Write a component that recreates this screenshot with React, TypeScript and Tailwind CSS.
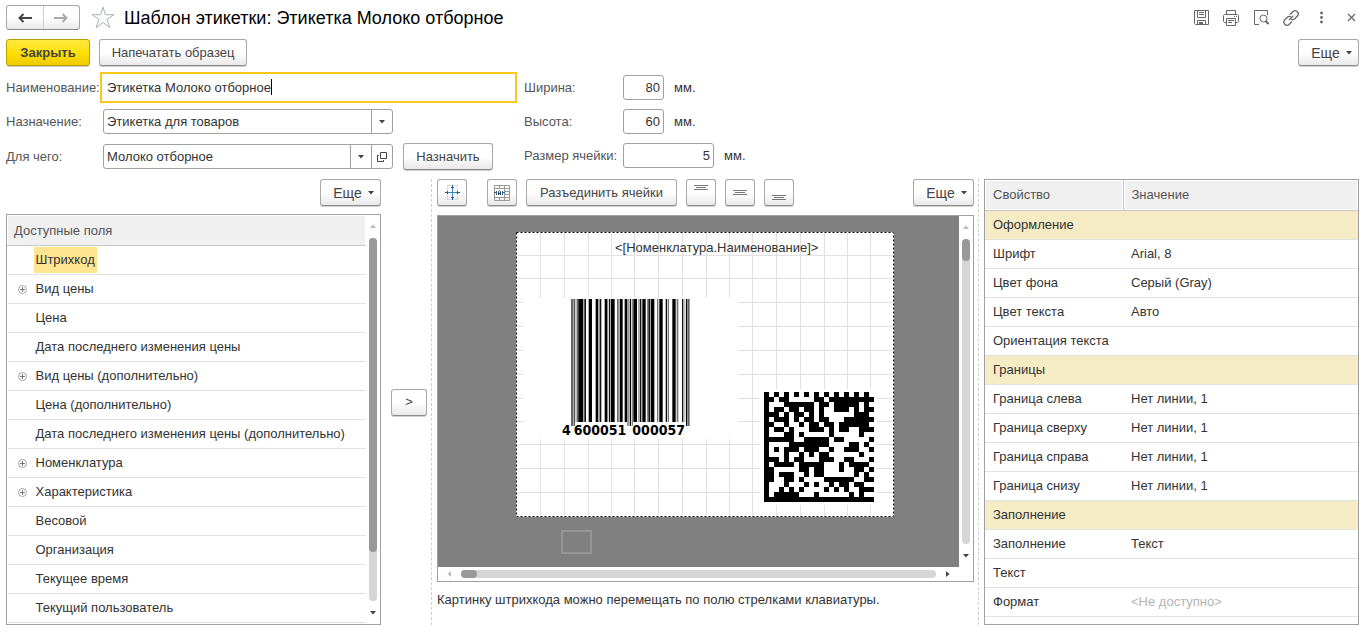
import React from "react";

const BUTTON =
  "flex h-[27px] shrink-0 items-center justify-center rounded-[3px] border border-[#a8a8a8] border-b-[#8c8c8c] bg-linear-to-b from-white from-50% to-[#e9e9e9] text-[#444] shadow-[0_1px_0_#d0d0d0]";
const FIELD = "flex h-[25px] rounded-[3px] border border-[#a0a0a0] bg-white";
const TEXT_INPUT = "min-w-0 flex-1 bg-transparent px-[3px] text-[#333] outline-none";
const LABEL = "shrink-0 whitespace-nowrap text-[#555]";

const FIELDS = [
  { name: "Штрихкод", selected: true },
  { name: "Вид цены", group: true },
  { name: "Цена" },
  { name: "Дата последнего изменения цены" },
  { name: "Вид цены (дополнительно)", group: true },
  { name: "Цена (дополнительно)" },
  { name: "Дата последнего изменения цены (дополнительно)" },
  { name: "Номенклатура", group: true },
  { name: "Характеристика", group: true },
  { name: "Весовой" },
  { name: "Организация" },
  { name: "Текущее время" },
  { name: "Текущий пользователь" },
];

const PROPERTIES: { name: string; value?: string; section?: boolean; disabled?: boolean }[] = [
  { name: "Оформление", section: true },
  { name: "Шрифт", value: "Arial, 8" },
  { name: "Цвет фона", value: "Серый (Gray)" },
  { name: "Цвет текста", value: "Авто" },
  { name: "Ориентация текста" },
  { name: "Границы", section: true },
  { name: "Граница слева", value: "Нет линии, 1" },
  { name: "Граница сверху", value: "Нет линии, 1" },
  { name: "Граница справа", value: "Нет линии, 1" },
  { name: "Граница снизу", value: "Нет линии, 1" },
  { name: "Заполнение", section: true },
  { name: "Заполнение", value: "Текст" },
  { name: "Текст" },
  { name: "Формат", value: "<Не доступно>", disabled: true },
];

const MATRIX = [
  "1010101010101010101010",
  "1101100000110111111111",
  "1000111111011011111010",
  "1011011011010011101011",
  "1110101101010000001110",
  "1011101011011000111111",
  "1100100101101101111110",
  "1011010001110101100111",
  "1000110100000100000100",
  "1111110011111011000001",
  "1000011111111000011010",
  "1010111011100100111001",
  "1000100101011000000100",
  "1110101100011100110001",
  "1011110111110001011110",
  "1100000110110001001101",
  "1101110010110000001010",
  "1100110100001111110011",
  "1000100010100101101100",
  "1001010100001010100111",
  "1011111000100000010100",
  "1111111111111111111111",
];

/* Each bar: start, end, colour; three units to a pixel. */
const BARS: [number, number, string][] = [
  [0, 6, "#666"], [8, 11, "#000"], [13, 18, "#bbb"], [18, 22, "#666"], [22, 37, "#000"],
  [40, 45, "#111"], [53, 63, "#000"], [74, 81, "#000"], [82, 85, "#888"], [86, 91, "#111"],
  [101, 108, "#000"], [108, 112, "#888"], [114, 118, "#111"], [120, 131, "#000"],
  [138, 143, "#666"], [146, 155, "#000"], [161, 168, "#000"], [168, 176, "#999"],
  [177, 180, "#000"], [182, 186, "#888"], [187, 198, "#000"], [201, 204, "#aaa"],
  [206, 211, "#111"], [214, 224, "#000"], [228, 231, "#888"], [232, 237, "#111"],
  [239, 250, "#000"], [258, 262, "#777"], [265, 275, "#000"], [284, 288, "#111"],
  [290, 294, "#777"], [304, 314, "#000"], [317, 322, "#777"], [333, 337, "#111"],
  [340, 343, "#aaa"], [345, 349, "#000"], [350, 356, "#666"],
];

const COLUMN_LINES = [24, 48, 72, 95, 118, 142, 166, 190, 213, 236, 260, 284, 308, 331, 354];
const ROW_LINES = [23, 46, 70, 94, 118, 142, 166, 189, 212, 236, 260];

function Caret({ className = "" }: { className?: string }) {
  return (
    <svg className={`shrink-0 ${className}`} width="6" height="4" viewBox="0 0 6 4" aria-hidden="true">
      <path d="M0 0H6L3 3.5Z" fill="currentColor" />
    </svg>
  );
}

function MoreButton() {
  return (
    <button type="button" className={`${BUTTON} w-[61px] gap-[6px] pl-[6px]`}>
      <span className="text-sm">Еще</span>
      <Caret />
    </button>
  );
}

function ExpandIcon() {
  return (
    <svg width="9" height="9" viewBox="0 0 9 9" fill="none" aria-hidden="true">
      <circle cx="4.5" cy="4.5" r="4" stroke="#a5a5a5" />
      <path d="M2 4.5H7M4.5 2V7" stroke="#777" />
    </svg>
  );
}

function VerticalScroll({ thumb, rest }: { thumb: string; rest: string }) {
  return (
    <div className="flex w-[14px] shrink-0 flex-col items-center bg-white py-[9px]" aria-hidden="true">
      <Caret className="rotate-180 text-[#bbb]" />
      <div className="mt-[10px] mb-[10px] flex w-2 flex-1 flex-col rounded-full bg-[#d6d6d6]">
        <div className={`rounded-full bg-[#999] ${thumb}`} />
        <div className={rest} />
      </div>
      <Caret className="text-[#444]" />
    </div>
  );
}

function TopBar() {
  return (
    <header className="flex h-[25px] items-center">
      <div className="flex h-[25px] w-[74px] shrink-0 rounded-[3px] border border-[#a8a8a8] border-b-[#8c8c8c] bg-linear-to-b from-white from-50% to-[#e9e9e9]">
        <button type="button" aria-label="Назад" className="flex flex-1 items-center justify-center border-r border-[#d0d0d0]">
          <svg width="14" height="10" viewBox="0 0 14 10" fill="none" stroke="#444" strokeWidth="2" aria-hidden="true">
            <path d="M14 5H2M5.5 1L1.5 5L5.5 9" />
          </svg>
        </button>
        <button type="button" aria-label="Вперед" className="flex flex-1 items-center justify-center">
          <svg width="14" height="10" viewBox="0 0 14 10" fill="none" stroke="#aaa" strokeWidth="2" aria-hidden="true">
            <path d="M0 5H12M8.500 1L12.500 5L8.500 9" />
          </svg>
        </button>
      </div>
      <button type="button" aria-label="В избранное" className="ml-[11px]">
        <svg width="24" height="23" viewBox="0 0 24 23" fill="none" stroke="#aab0b6" aria-hidden="true">
          <path d="M12 1L14.4 8.7H22.8L16 13.4L18.8 21.5L12 16.5L5.200 21.5L8 13.4L1.200 8.7H9.600Z" />
        </svg>
      </button>
      <h1 className="ml-[9px] min-w-0 flex-1 truncate text-lg text-black">Шаблон этикетки: Этикетка Молоко отборное</h1>
      <div className="flex items-center gap-[14px] text-[#666]">
        <button type="button" aria-label="Сохранить">
          <svg width="16" height="16" viewBox="0 0 16 16" fill="none" stroke="currentColor" aria-hidden="true">
            <path d="M1.5 .5H15.5V14.5H2.5L1.5 13.5ZM4.5 .5V7.5H12.5V.5M6 2.5H11M6 4.500H11M4.5 14.5V10.5H12.5V14.5" />
            <path d="M6 12H10V15H6Z" fill="currentColor" stroke="none" />
          </svg>
        </button>
        <button type="button" aria-label="Печать">
          <svg width="16" height="16" viewBox="0 0 16 16" fill="none" stroke="currentColor" aria-hidden="true">
            <path d="M3.5 4.5V.5H12.5V4.5M3.5 12.5H1.5L.5 11.5V5.5L1.5 4.5H14.5L15.5 5.5V11.5L14.5 12.5H12.5M3.5 8.5H12.5V15.5H3.5ZM5 10.5H11M5 12.5H9M11 6.5H12M13 6.5H14" />
          </svg>
        </button>
        <button type="button" aria-label="Предварительный просмотр">
          <svg width="16" height="16" viewBox="0 0 16 16" fill="none" stroke="currentColor" aria-hidden="true">
            <path d="M6 14.5H1.5V.5H14.5V5" />
            <circle cx="10.5" cy="8.5" r="3.5" />
            <path d="M12.500 11L15.500 14" strokeWidth="2" />
          </svg>
        </button>
        <button type="button" aria-label="Получить ссылку">
          <svg width="16" height="16" viewBox="0 0 16 16" fill="none" stroke="currentColor" strokeWidth="1.3" aria-hidden="true">
            <path d="M7 4.5L9.7 1.8A3 3 0 0 1 14.2 6.3L11.5 9Q9.8 10.2 8.2 9.2M9 11.5L6.3 14.2A3 3 0 0 1 1.8 9.7L4.5 7Q6.2 5.8 7.8 6.8M6 10L10 6" />
          </svg>
        </button>
        <button type="button" aria-label="Дополнительно">
          <svg width="16" height="16" viewBox="0 0 16 16" fill="currentColor" aria-hidden="true">
            <circle cx="8.5" cy="3" r="1.4" />
            <circle cx="8.5" cy="7.500" r="1.4" />
            <circle cx="8.5" cy="12" r="1.4" />
          </svg>
        </button>
        <button type="button" aria-label="Закрыть окно">
          <svg width="16" height="16" viewBox="0 0 16 16" fill="none" stroke="currentColor" strokeWidth="1.2" aria-hidden="true">
            <path d="M5 4L12 11M12 4L5 11" />
          </svg>
        </button>
      </div>
    </header>
  );
}

function LabelForm() {
  return (
    <form className="mt-[9px] flex" onSubmit={(e) => e.preventDefault()}>
      <div className="flex w-[508px] shrink-0 flex-col gap-[9px]">
        <div className="flex items-center">
          <label htmlFor="name" className={`${LABEL} w-[97px]`}>Наименование:</label>
          <div className="relative flex h-[25px] flex-1 bg-white outline-2 outline-offset-[1px] outline-[#fac81e]">
            <input id="name" className="min-w-0 flex-1 bg-transparent px-1 text-[#333] outline-none" defaultValue="Этикетка Молоко отборное" />
            <span className="absolute top-1 left-[168px] h-4 w-px bg-black" aria-hidden="true" />
          </div>
        </div>
        <div className="flex items-center">
          <label htmlFor="purpose" className={`${LABEL} w-[97px]`}>Назначение:</label>
          <div className={`${FIELD} w-[290px]`}>
            <select id="purpose" className={`${TEXT_INPUT} appearance-none`}>
              <option>Этикетка для товаров</option>
            </select>
            <span className="flex w-[21px] items-center justify-center border-l border-[#a0a0a0] text-[#444]">
              <Caret />
            </span>
          </div>
        </div>
        <div className="flex items-center">
          <label htmlFor="target" className={`${LABEL} w-[97px]`}>Для чего:</label>
          <div className={`${FIELD} w-[290px]`}>
            <input id="target" className={TEXT_INPUT} defaultValue="Молоко отборное" />
            <button type="button" aria-label="Выбрать" className="flex w-[21px] items-center justify-center border-l border-[#a0a0a0] text-[#444]">
              <Caret />
            </button>
            <button type="button" aria-label="Открыть" className="flex w-[21px] items-center justify-center border-l border-[#a0a0a0]">
              <svg width="10" height="10" viewBox="0 0 10 10" fill="none" stroke="#444" aria-hidden="true">
                <path d="M3.5 .5H9.5V6.5H3.5ZM2 3.5H.5V9.5H6.5V8" />
              </svg>
            </button>
          </div>
          <button type="button" className={`${BUTTON} ml-[10px] w-[90px]`}>Назначить</button>
        </div>
      </div>
      <div className="ml-[10px] flex flex-col gap-[9px]">
        <div className="flex items-center">
          <label htmlFor="width" className={`${LABEL} w-[99px]`}>Ширина:</label>
          <div className={`${FIELD} w-[41px]`}>
            <input id="width" className={`${TEXT_INPUT} text-right`} defaultValue="80" />
          </div>
          <span className="ml-[10px] text-[#333]">мм.</span>
        </div>
        <div className="flex items-center">
          <label htmlFor="height" className={`${LABEL} w-[99px]`}>Высота:</label>
          <div className={`${FIELD} w-[41px]`}>
            <input id="height" className={`${TEXT_INPUT} text-right`} defaultValue="60" />
          </div>
          <span className="ml-[10px] text-[#333]">мм.</span>
        </div>
        <div className="flex items-center">
          <label htmlFor="cell" className={`${LABEL} w-[99px]`}>Размер ячейки:</label>
          <div className={`${FIELD} w-[91px]`}>
            <input id="cell" className={`${TEXT_INPUT} text-right`} defaultValue="5" />
          </div>
          <span className="ml-[10px] text-[#333]">мм.</span>
        </div>
      </div>
    </form>
  );
}

function FieldsPanel() {
  return (
    <section className="flex min-w-0 border-r border-dashed border-[#cfcfcf] pr-1">
      <div className="flex min-w-0 flex-1 flex-col">
        <div className="mb-2 flex justify-end">
          <MoreButton />
        </div>
        <div className="flex flex-1 border border-[#a0a0a0]">
          <div className="min-w-0 flex-1">
            <table className="w-full border-collapse text-left">
              <thead>
                <tr className="h-[30px] border-b border-[#c8c8c8]">
                  <th className="border border-white border-b-[#c8c8c8] bg-[#f0f0f0] px-[6px] py-0 font-normal text-[#555]">Доступные поля</th>
                </tr>
              </thead>
              <tbody>
                {FIELDS.map((field) => (
                  <tr key={field.name} className="h-[29px] border-b border-[#e2e2e2]">
                    <td className="p-0">
                      <div className="flex items-center">
                        <span className="flex w-[26px] shrink-0 justify-center pl-1">{field.group && <ExpandIcon />}</span>
                        <span className={`px-[2px] leading-[26px] whitespace-nowrap ${field.selected ? "bg-[#ffe590]" : ""}`}>{field.name}</span>
                      </div>
                    </td>
                  </tr>
                ))}
              </tbody>
            </table>
          </div>
          <VerticalScroll thumb="grow-[314]" rest="grow-[49]" />
        </div>
      </div>
      <button type="button" aria-label="Добавить поле" className={`${BUTTON} ml-[10px] w-[36px] self-center`}>&gt;</button>
    </section>
  );
}

function Barcode() {
  return (
    <div className="absolute top-[66px] left-[8px] h-[141px] w-[214px] bg-white">
      <svg className="absolute top-[1px] left-[47px]" width="119" height="127" viewBox="0 0 357 381" aria-hidden="true">
        {BARS.map(([from, to, fill]) => {
          const guard = to <= 11 || (from >= 168 && to <= 186) || from >= 345;
          return <rect key={from} x={from} y="0" width={to - from} height={guard ? 381 : 369} fill={fill} />;
        })}
      </svg>
      <div className="absolute top-[124px] left-[38px] flex gap-[3px] font-['DejaVu_Sans_Condensed','DejaVu_Sans',sans-serif] text-sm leading-4 font-bold text-black">
        <span>4</span>
        <span className="mr-[3px]">600051</span>
        <span>000057</span>
      </div>
    </div>
  );
}

function DataMatrix() {
  return (
    <div className="absolute top-[157px] left-[245px] bg-white p-[3px]">
      <svg width="110" height="110" viewBox="0 0 22 22" shapeRendering="crispEdges" aria-hidden="true">
        {MATRIX.map((row, y) =>
          Array.from(row).map((cell, x) => (cell === "1" ? <rect key={`${x}-${y}`} x={x} y={y} width="1" height="1" /> : null)),
        )}
      </svg>
    </div>
  );
}

function LabelCanvas() {
  return (
    <div className="relative h-[351px] min-w-0 flex-1 overflow-hidden bg-[#808080]">
      <div className="absolute top-4 left-[78px] h-[285px] w-[378px] bg-white">
        <svg width="378" height="285" viewBox="0 0 378 285" fill="none" aria-hidden="true">
          {COLUMN_LINES.map((x) => (
            <path key={x} d={`M${x + 0.5} 0V285`} stroke="#e2e2e2" />
          ))}
          {ROW_LINES.map((y) => (
            <path key={y} d={`M0 ${y + 0.5}H378`} stroke="#e2e2e2" />
          ))}
          <rect x=".5" y=".5" width="377" height="284" stroke="#fff" />
          <rect x=".5" y=".5" width="377" height="284" stroke="#000" strokeDasharray="2 2" />
        </svg>
        <p className="absolute top-2 left-[99px] whitespace-nowrap">&lt;[Номенклатура.Наименование]&gt;</p>
        <Barcode />
        <DataMatrix />
      </div>
      <div className="absolute top-[314px] left-[123px] h-[24px] w-[31px] border-2 border-[#959595]" />
    </div>
  );
}

function AlignIcon({ shift }: { shift: number }) {
  return (
    <svg width="14" height="17" viewBox="0 0 14 17" fill="none" stroke="#777" aria-hidden="true">
      <path d={`M0 ${shift + 0.5}H14M2 ${shift + 2.5}H12M0 ${shift + 4.5}H14`} />
    </svg>
  );
}

function Toolbar() {
  return (
    <div className="flex">
      <button type="button" aria-label="Размер" className={`${BUTTON} w-[30px]`}>
        <svg width="15" height="15" viewBox="0 0 15 15" fill="none" aria-hidden="true">
          <path d="M2.5 .5H12.5V14.5H2.5Z" stroke="#bbb" strokeDasharray="1 1" />
          <path d="M1 7.5H14M7.5 1V14" stroke="#3d86b8" />
          <path d="M0 7.5H2M13 7.5H15M2.500 6V9M12.500 6V9M7.5 0V2M7.5 13V15M6 2.500H9M6 12.500H9" stroke="#1a5f92" />
        </svg>
      </button>
      <button type="button" aria-label="Объединить ячейки" className={`${BUTTON} ml-5 w-[30px]`}>
        <svg width="16" height="16" viewBox="0 0 16 16" fill="none" aria-hidden="true">
          <path d="M.5 .5H15.5V15.5H.5ZM.5 3.5H15.5M.5 12.5H15.5M10.5 .5V15.5M5.5 .5V3.5M5.5 12.5V15.5M10.5 6.5H15.5M10.5 9.5H15.5" stroke="#999" />
          <path d="M1 4H10V12H1Z" fill="#fff" />
          <path d="M2.5 6V10M8.5 6V10M0 7.5H3M8 7.500H11" stroke="#1a6496" />
          <path d="M4.500 10V6.500L5.5 5.500L6.500 6.500V10M4.500 8.500H6.500" stroke="#333" />
        </svg>
      </button>
      <button type="button" className={`${BUTTON} ml-[9px] w-[151px]`}>Разъединить ячейки</button>
      <button type="button" aria-label="По верху" className={`${BUTTON} ml-[9px] w-[30px]`}>
        <AlignIcon shift={1} />
      </button>
      <button type="button" aria-label="По центру" className={`${BUTTON} ml-[9px] w-[30px]`}>
        <AlignIcon shift={6} />
      </button>
      <button type="button" aria-label="По низу" className={`${BUTTON} ml-[9px] w-[30px]`}>
        <AlignIcon shift={11} />
      </button>
      <div className="ml-auto">
        <MoreButton />
      </div>
    </div>
  );
}

function DesignPanel() {
  return (
    <section className="min-w-0 border-r border-dashed border-[#cfcfcf] pr-1 pl-[5px]">
      <Toolbar />
      <div className="mt-[9px] border border-[#a0a0a0]">
        <div className="flex">
          <LabelCanvas />
          <VerticalScroll thumb="grow-[22]" rest="grow-[283]" />
        </div>
        <div className="flex h-[14px] items-center pr-[22px] pl-2" aria-hidden="true">
          <Caret className="rotate-90 text-[#bbb]" />
          <div className="mx-[9px] flex h-2 flex-1 rounded-full bg-[#d6d6d6]">
            <div className="w-4 rounded-full bg-[#999]" />
          </div>
          <Caret className="-rotate-90 text-[#444]" />
        </div>
      </div>
      <p className="mt-[10px]">Картинку штрихкода можно перемещать по полю стрелками клавиатуры.</p>
    </section>
  );
}

function PropertiesPanel() {
  return (
    <section className="ml-[5px] min-w-0 border border-[#a0a0a0]">
      <table className="w-full table-fixed border-collapse text-left">
        <thead>
          <tr className="h-[30px] text-[#555]">
            <th className="w-[37%] border-r border-b border-[#c8c8c8] bg-[#f0f0f0] px-2 py-0 font-normal shadow-[inset_0_0_0_1px_#fff]">Свойство</th>
            <th className="border-b border-[#c8c8c8] bg-[#f0f0f0] px-2 py-0 font-normal shadow-[inset_0_0_0_1px_#fff]">Значение</th>
          </tr>
        </thead>
        <tbody className="border-b border-[#e2e2e2]">
          {PROPERTIES.map((property, index) => (
            <tr key={index} className={`h-[29px] border-b border-[#e2e2e2] ${property.section ? "bg-[#f5ecc6]" : ""}`}>
              <td className="px-2 py-0 whitespace-nowrap">{property.name}</td>
              <td className={`px-2 py-0 whitespace-nowrap ${property.disabled ? "text-[#b5b5b5]" : ""}`}>{property.value}</td>
            </tr>
          ))}
        </tbody>
      </table>
    </section>
  );
}

export default function App() {
  return (
    <main className="bg-white pt-[5px] pr-[10px] pb-[7px] pl-[6px] font-['Liberation_Sans',Arial,sans-serif] text-[13px] leading-4 text-[#333]">
      <TopBar />
      <div className="mt-[9px] flex">
        <button type="button" className="h-[27px] w-[84px] rounded-[3px] border border-[#b8a000] bg-linear-to-b from-[#ffe93b] via-[#ffe000] to-[#efcb00] font-bold text-[#444] shadow-[0_1px_0_#d0d0d0]">
          Закрыть
        </button>
        <button type="button" className={`${BUTTON} ml-[9px] w-[148px]`}>Напечатать образец</button>
        <div className="ml-auto">
          <MoreButton />
        </div>
      </div>
      <LabelForm />
      <div className="mt-[9px] grid min-h-[446px] grid-cols-[minmax(0,426fr)_minmax(0,547fr)_minmax(0,380fr)]">
        <FieldsPanel />
        <DesignPanel />
        <PropertiesPanel />
      </div>
    </main>
  );
}
